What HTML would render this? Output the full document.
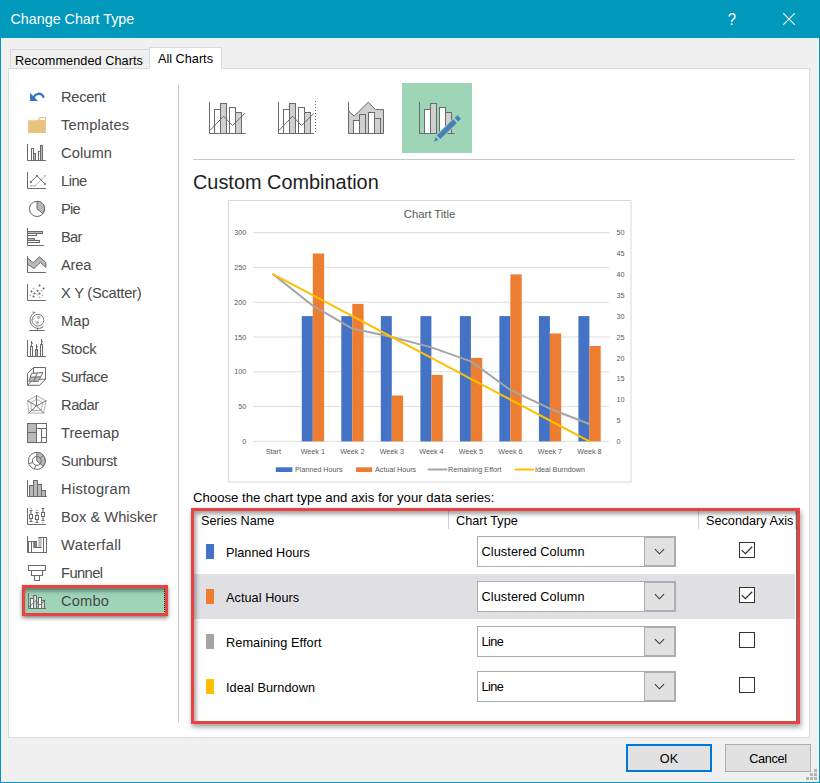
<!DOCTYPE html>
<html>
<head>
<meta charset="utf-8">
<title>Change Chart Type</title>
<style>
html,body{margin:0;padding:0;}
body{width:820px;height:783px;overflow:hidden;background:#f0f0f0;font-family:"Liberation Sans",sans-serif;position:relative;}
.abs{position:absolute;}
#win{position:absolute;left:0;top:0;width:818px;height:782px;border-left:1px solid #0099bc;border-right:1px solid #0099bc;border-bottom:1px solid #0099bc;box-sizing:content-box;background:#f0f0f0;}
#titlebar{position:absolute;left:0;top:0;width:820px;height:38px;background:#0099bc;}
#title{position:absolute;left:10.5px;top:9px;color:#fff;font-size:14.3px;line-height:20px;white-space:nowrap;}
#help{position:absolute;left:725px;top:9px;width:14px;text-align:center;color:#fff;font-size:16.5px;line-height:20px;transform:scaleX(0.9);}
#panel{position:absolute;left:8px;top:68px;width:800px;height:668px;border:1px solid #dadada;background:#fff;}
.tab{position:absolute;box-sizing:border-box;border:1px solid #d9d9d9;border-bottom:none;font-size:12.7px;color:#000;white-space:nowrap;}
#tab1{left:10px;top:49px;width:140px;height:19px;background:#f0f0f0;}
#tab1 span{position:absolute;left:4px;top:4px;letter-spacing:0.06px;line-height:15px;}
#tab2{left:149px;top:47px;width:73px;height:22px;background:#fff;}
#tab2 span{position:absolute;left:8px;top:4px;line-height:15px;}
#vsep{position:absolute;left:178px;top:85px;width:1px;height:637px;background:#c8c8c8;}
.nav{position:absolute;left:61px;font-size:14.7px;color:#494949;line-height:20px;white-space:nowrap;}
.ico{position:absolute;left:24px;width:26px;height:26px;}
#combo{position:absolute;left:22px;top:585px;width:140px;height:25px;border:3px solid #e84340;background:#9fd5b7;box-shadow:0 2px 4px rgba(0,0,0,.5), inset 1px 5px 4px -2px rgba(0,0,0,.42);}
#combo i{position:absolute;right:0;top:1px;width:0;height:23px;border-left:1px dotted #222;}
#hsep{position:absolute;left:193px;top:159px;width:602px;height:1px;background:#c8c8c8;}
#sel{position:absolute;left:402px;top:83px;width:70px;height:70px;background:#9fd5b7;}
#heading{position:absolute;left:193px;top:170px;font-size:19.9px;line-height:24px;color:#1e1e1e;white-space:nowrap;}

#choose{position:absolute;left:193px;top:490px;font-size:13.17px;line-height:16px;color:#000;white-space:nowrap;}
#redbox{position:absolute;left:191px;top:508px;width:603px;height:210px;border:3px solid #e84340;background:transparent;box-shadow:1px 3px 5px rgba(0,0,0,.38), inset -1px 0 0 rgba(70,80,95,.85), inset 3px 4px 4px -1px rgba(0,0,0,.38);z-index:5;pointer-events:none;}
.t13{position:absolute;font-size:12.7px;line-height:16px;color:#000;white-space:nowrap;}
.row2{position:absolute;left:194px;top:574px;width:601px;height:45px;background:#e0dfe4;}
.sw{position:absolute;left:206px;width:8px;height:15px;}
.dd{position:absolute;left:477px;width:197px;height:29px;border:1px solid #abadb3;background:#fff;box-sizing:content-box;}
.dd .btn{position:absolute;right:0;top:0;width:31px;height:29px;box-sizing:border-box;background:#e1e1e1;border:1px solid #adadad;}
.dd .btn svg{position:absolute;left:-1px;top:-1px;}
.dd span{position:absolute;left:3.5px;top:7px;letter-spacing:0.1px;font-size:12.7px;line-height:16px;color:#000;white-space:nowrap;}
.cb{position:absolute;left:739px;width:14px;height:14px;border:1px solid #333;background:#fff;}
.button{position:absolute;top:744px;height:28px;box-sizing:border-box;background:#e1e1e1;font-size:12.7px;color:#000;text-align:center;line-height:16px;}
#ok{left:626px;width:86px;border:2px solid #0078d7;}
#cancel{left:725px;width:86px;border:1px solid #adadad;}
</style>
</head>
<body>
<div id="win"></div>
<div id="titlebar">
  <div id="title">Change Chart Type</div>
  <div id="help">?</div>
  <svg class="abs" style="left:783px;top:13px" width="12" height="12" viewBox="0 0 12 12"><path d="M0.3 0.3 L11.7 11.7 M11.7 0.3 L0.3 11.7" stroke="#fff" stroke-width="1.1" fill="none"/></svg>
</div>

<div id="panel"></div>
<div class="tab" id="tab1"><span>Recommended Charts</span></div>
<div class="tab" id="tab2"><span>All Charts</span></div>

<div id="vsep"></div>

<!-- NAV -->
<div id="combo"><i></i></div>
<div id="navlist">
<div class="nav" style="top:87px;letter-spacing:-0.32px">Recent</div>
<div class="nav" style="top:115px;letter-spacing:0.14px">Templates</div>
<div class="nav" style="top:143px;letter-spacing:0.06px">Column</div>
<div class="nav" style="top:171px;letter-spacing:-0.5px">Line</div>
<div class="nav" style="top:199px;letter-spacing:-0.8px">Pie</div>
<div class="nav" style="top:227px;letter-spacing:-0.75px">Bar</div>
<div class="nav" style="top:255px;letter-spacing:-0.2px">Area</div>
<div class="nav" style="top:283px;letter-spacing:-0.24px">X Y (Scatter)</div>
<div class="nav" style="top:311px;letter-spacing:0.1px">Map</div>
<div class="nav" style="top:339px;letter-spacing:-0.3px">Stock</div>
<div class="nav" style="top:367px;letter-spacing:-0.52px">Surface</div>
<div class="nav" style="top:395px;letter-spacing:-0.48px">Radar</div>
<div class="nav" style="top:423px;letter-spacing:-0.03px">Treemap</div>
<div class="nav" style="top:451px;letter-spacing:-0.39px">Sunburst</div>
<div class="nav" style="top:479px;letter-spacing:0.29px">Histogram</div>
<div class="nav" style="top:507px;letter-spacing:0px">Box &amp; Whisker</div>
<div class="nav" style="top:535px;letter-spacing:0.33px">Waterfall</div>
<div class="nav" style="top:563px;letter-spacing:-0.58px">Funnel</div>
<div class="nav" style="top:591px;letter-spacing:0.15px">Combo</div>
</div>
<!-- NAVICONS_START -->
<svg class="abs" style="left:20px;top:84px" width="36" height="536" viewBox="20 84 36 536" fill="none" stroke-width="1">
<path d="M33.8 99 A5 5 0 0 1 43.7 97.8" stroke="#3573bb" stroke-width="2.3" fill="none"/>
<path d="M30 92.8 L30 101 L38 101 Z" fill="#3573bb"/>
<path d="M28.1 120.2 L37.4 120.2 L39.7 117.1 L45.9 117.1 L45.9 132.9 L28.1 132.9 Z" fill="#e9c27f"/>
<path d="M40.4 118.1 L45 118.1 L45 119.9 L39.1 119.9 Z" fill="#fdf6ea"/>
<path d="M27.5 144 V160.5 H45.9" stroke="#6a6a6a"/>
<rect x="31.5" y="148.5" width="2.00" height="12.00" fill="#fff" stroke="#6a6a6a"/>
<rect x="33.5" y="153.5" width="2.00" height="7.00" fill="#b9b9b9" stroke="#6a6a6a"/>
<rect x="38.5" y="151.5" width="2.00" height="9.00" fill="#fff" stroke="#6a6a6a"/>
<rect x="40.5" y="145.5" width="2.00" height="15.00" fill="#b9b9b9" stroke="#6a6a6a"/>
<path d="M27.5 172 V188.5 H45.9" stroke="#6a6a6a"/>
<polyline points="30.9,185.8 35,185.8 45,175.8" stroke="#b4b4b4"/>
<rect x="30.099999999999998" y="185.0" width="1.6" height="1.6" fill="#b4b4b4"/>
<rect x="34.2" y="185.0" width="1.6" height="1.6" fill="#b4b4b4"/>
<rect x="44.2" y="175.0" width="1.6" height="1.6" fill="#b4b4b4"/>
<polyline points="30.9,182 37,175.8 45,184" stroke="#6a6a6a"/>
<rect x="30.0" y="181.1" width="1.8" height="1.8" fill="#6a6a6a"/>
<rect x="36.1" y="174.9" width="1.8" height="1.8" fill="#6a6a6a"/>
<rect x="44.1" y="183.1" width="1.8" height="1.8" fill="#6a6a6a"/>
<circle cx="37" cy="208.9" r="7.6" fill="#fff" stroke="#6a6a6a"/>
<path d="M37 208.9 L37 201.3 A7.6 7.6 0 0 1 42.99 213.58 Z" fill="#b9b9b9" stroke="#6a6a6a" stroke-linejoin="round"/>
<path d="M27.5 228 V245.5 H43.8" stroke="#6a6a6a"/>
<rect x="27.5" y="231.5" width="15.00" height="2.00" fill="#b9b9b9" stroke="#6a6a6a"/>
<rect x="27.5" y="233.5" width="9.00" height="2.00" fill="#fff" stroke="#6a6a6a"/>
<rect x="27.5" y="238.5" width="7.00" height="2.00" fill="#b9b9b9" stroke="#6a6a6a"/>
<rect x="27.5" y="240.5" width="12.00" height="2.00" fill="#fff" stroke="#6a6a6a"/>
<path d="M27.5 258.1 L33.2 262.7 L39.3 256.7 L45.9 262.7 L45.9 267.4 L40.4 262.4 L34 268.5 L27.5 264.2 Z" fill="#b9b9b9" stroke="#6a6a6a" stroke-linejoin="round"/>
<path d="M27.5 256 V272.5 H45.9" stroke="#6a6a6a"/>
<path d="M27.5 284 V300.5 H45.9" stroke="#6a6a6a"/>
<path d="M39.5 284.15 L40.75 285.4 L39.5 286.65 L38.25 285.4 Z" fill="#6a6a6a"/>
<path d="M43.6 287.25 L44.85 288.5 L43.6 289.75 L42.35 288.5 Z" fill="#6a6a6a"/>
<path d="M31.5 290.15 L32.75 291.4 L31.5 292.65 L30.25 291.4 Z" fill="#6a6a6a"/>
<path d="M37.5 289.45 L38.75 290.7 L37.5 291.95 L36.25 290.7 Z" fill="#6a6a6a"/>
<path d="M34.5 292.15 L35.75 293.4 L34.5 294.65 L33.25 293.4 Z" fill="#6a6a6a"/>
<path d="M39.5 292.15 L40.75 293.4 L39.5 294.65 L38.25 293.4 Z" fill="#6a6a6a"/>
<path d="M33.5 295.35 L34.75 296.6 L33.5 297.85 L32.25 296.6 Z" fill="#6a6a6a"/>
<path d="M33.5 287.25 L34.75 288.5 L33.5 289.75 L32.25 288.5 Z" fill="#c4c4c4"/>
<path d="M41.5 289.45 L42.75 290.7 L41.5 291.95 L40.25 290.7 Z" fill="#c4c4c4"/>
<path d="M30.4 294.05 L31.65 295.3 L30.4 296.55 L29.15 295.3 Z" fill="#c4c4c4"/>
<path d="M37.4 293.35 L38.65 294.6 L37.4 295.85 L36.15 294.6 Z" fill="#c4c4c4"/>
<path d="M42.5 294.05 L43.75 295.3 L42.5 296.55 L41.25 295.3 Z" fill="#c4c4c4"/>
<path d="M39.5 296.05 L40.75 297.3 L39.5 298.55 L38.25 297.3 Z" fill="#c4c4c4"/>
<circle cx="37.9" cy="320.2" r="5.9" fill="#fff" stroke="#7c7c7c"/>
<path d="M36.5 316.5 q2 -1.6 4 0 q0.6 1.8 -1.4 2.6 q-2.2 0.2 -2.6 -2.6z M35.2 321.5 q2.4 -1.2 4.2 0.4 q-0.2 2.2 -2.2 2.6 q-2 -0.6 -2 -3z M33.2 318.4 q0.8 -0.8 1 0.6 q-0.2 1 -0.8 1z" fill="#bdbdbd"/>
<path d="M34.4 312.6 A8.3 8.3 0 0 0 42.6 327.4" stroke="#6a6a6a" stroke-width="0.9"/>
<path d="M32.6 312.1 L35.4 312.5 M41.6 327.9 L43.4 326.2" stroke="#6a6a6a" stroke-width="0.9"/>
<path d="M37.4 328 V330.4 M29.3 330.5 H44.7" stroke="#6a6a6a"/>
<path d="M27.5 340 V356.5 H45.9" stroke="#6a6a6a"/>
<rect x="30.5" y="346.5" width="2.00" height="10.00" fill="#fff" stroke="#6a6a6a"/>
<path d="M31.5 341 V346.5 M31.5 343.3 H33" stroke="#6a6a6a"/>
<rect x="35.5" y="349.5" width="2.00" height="7.00" fill="#b9b9b9" stroke="#6a6a6a"/>
<path d="M36.5 344.1 V349.5 M36.5 346.8 H38" stroke="#6a6a6a"/>
<rect x="40.5" y="344.5" width="2.00" height="12.00" fill="#fff" stroke="#6a6a6a"/>
<path d="M41.5 338.9 V344.5 M41.5 341.4 H43" stroke="#6a6a6a"/>
<path d="M33.5 367.5 H45.5 V379.2 L39.5 385.3 H27.5 V373.4 Z M33.5 367.5 V379.2 H45.5 M27.5 385.3 L33.5 379.2" stroke="#6a6a6a" fill="#fff" stroke-linejoin="round"/>
<path d="M31.6 373.4 L42.9 372.5 L38.3 381.3 L28.9 381.3 Z" fill="#fff"/>
<path d="M30.2 377.2 L40.6 376.8 L38.3 381.3 L28.9 381.3 Z" fill="#b9b9b9"/>
<path d="M31.6 373.4 L42.9 372.5 L38.3 381.3 L28.9 381.3 Z M30.2 377.2 L40.6 376.8 M37.3 372.9 L33.7 381.3" stroke="#6a6a6a" stroke-linejoin="round"/>
<polygon points="36.5,395.6 46.1,400.8 43.6,413.0 28.8,413.0 27.7,400.8" stroke="#a8a8a8" stroke-width="0.9"/>
<polygon points="36.5,399.2 42.8,402.6 41.1,410.5 31.5,410.5 30.7,402.6" stroke="#a8a8a8" stroke-width="0.9"/>
<path d="M36.5 405.9 L36.5 395.1" stroke="#737373" stroke-width="1"/>
<path d="M36.5 405.9 L46.6 400.5" stroke="#737373" stroke-width="1"/>
<path d="M36.5 405.9 L44 413.4" stroke="#737373" stroke-width="1"/>
<path d="M36.5 405.9 L28.4 413.4" stroke="#737373" stroke-width="1"/>
<path d="M36.5 405.9 L27.2 400.5" stroke="#737373" stroke-width="1"/>
<rect x="27.5" y="423.5" width="9.00" height="9.00" fill="#b9b9b9" stroke="#6a6a6a"/>
<rect x="27.5" y="432.5" width="9.00" height="10.00" fill="#b9b9b9" stroke="#6a6a6a"/>
<rect x="36.5" y="423.5" width="10.00" height="5.00" fill="#fff" stroke="#6a6a6a"/>
<rect x="36.5" y="428.5" width="5.00" height="14.00" fill="#fff" stroke="#6a6a6a"/>
<rect x="41.5" y="428.5" width="5.00" height="9.00" fill="#fff" stroke="#6a6a6a"/>
<rect x="41.5" y="437.5" width="5.00" height="5.00" fill="#fff" stroke="#6a6a6a"/>
<circle cx="36.8" cy="460.9" r="8.5" fill="#fff" stroke="#6a6a6a"/>
<path d="M36.8 460.9 L36.8 452.4 A8.5 8.5 0 0 1 43.31 466.36 Z" fill="#b9b9b9" stroke="#6a6a6a" stroke-linejoin="round"/>
<circle cx="36.8" cy="460.9" r="4.4" stroke="#6a6a6a"/>
<path d="M40.17 458.07 L43.31 455.44" stroke="#6a6a6a"/>
<path d="M35.66 465.15 L34.60 469.11" stroke="#6a6a6a"/>
<path d="M32.67 462.40 L28.81 463.81" stroke="#6a6a6a"/>
<path d="M27.5 480.2 V496.5 H46.8" stroke="#6a6a6a"/>
<rect x="29.5" y="485.5" width="4.00" height="11.00" fill="#b9b9b9" stroke="#6a6a6a"/>
<rect x="33.5" y="480.5" width="4.00" height="16.00" fill="#b9b9b9" stroke="#6a6a6a"/>
<rect x="37.5" y="484.5" width="4.00" height="12.00" fill="#b9b9b9" stroke="#6a6a6a"/>
<rect x="41.5" y="490.5" width="4.00" height="6.00" fill="#b9b9b9" stroke="#6a6a6a"/>
<path d="M27.5 508 V524.5 H45.9" stroke="#6a6a6a"/>
<path d="M31 510.5 V521.5 M29.5 510.5 H32.5 M29.5 521.5 H32.5" stroke="#6a6a6a" stroke-width="1.1"/>
<rect x="29.5" y="514.5" width="3.00" height="4.00" fill="#fff" stroke="#6a6a6a"/>
<circle cx="31" cy="508.4" r="0.6" fill="#6a6a6a"/>
<path d="M37 512.5 V522.5 M35.5 512.5 H38.5 M35.5 522.5 H38.5" stroke="#6a6a6a" stroke-width="1.1"/>
<rect x="35.5" y="515.5" width="3.00" height="4.00" fill="#fff" stroke="#6a6a6a"/>
<circle cx="37" cy="510.4" r="0.6" fill="#6a6a6a"/>
<path d="M43 508.5 V520.5 M41.5 508.5 H44.5 M41.5 520.5 H44.5" stroke="#6a6a6a" stroke-width="1.1"/>
<rect x="41.5" y="512.5" width="3.00" height="4.00" fill="#fff" stroke="#6a6a6a"/>
<circle cx="43" cy="522.6" r="0.6" fill="#6a6a6a"/>
<path d="M27.5 536.2 V552.5 H46.8" stroke="#6a6a6a"/>
<rect x="33.2" y="541.5" width="3.8" height="5.9" fill="#7a7a7a"/>
<rect x="38.3" y="537.2" width="3.3" height="10.2" fill="#bcbcbc"/>
<rect x="28.5" y="541.5" width="3.00" height="11.00" fill="#fff" stroke="#6a6a6a"/>
<rect x="43.5" y="537.5" width="3.00" height="15.00" fill="#fff" stroke="#6a6a6a"/>
<path d="M28.5 541.5 H37 M33.2 547.5 H41.6 M38.3 537.5 H46.5" stroke="#6a6a6a"/>
<rect x="28.5" y="565.5" width="17.00" height="5.00" fill="#fff" stroke="#6a6a6a"/>
<rect x="31.5" y="570.5" width="11.00" height="5.00" fill="#fff" stroke="#6a6a6a"/>
<rect x="34.5" y="575.5" width="5.00" height="5.00" fill="#fff" stroke="#6a6a6a"/>
<path d="M28.5 593.1 V608.5 H45.9" stroke="#6a6a6a"/>
<rect x="30.5" y="598.5" width="3.00" height="10.00" fill="#fff" stroke="#6a6a6a"/>
<rect x="33.5" y="595.5" width="3.00" height="13.00" fill="#d9d9d9" stroke="#6a6a6a"/>
<rect x="38.5" y="597.5" width="3.00" height="11.00" fill="#fff" stroke="#6a6a6a"/>
<rect x="41.5" y="600.5" width="3.00" height="8.00" fill="#d9d9d9" stroke="#6a6a6a"/>
<polyline points="29,607 35.5,601 40.1,605 45.6,599.5" stroke="#6a6a6a" stroke-width="0.9"/>
</svg>
<!-- NAVICONS_END -->

<!-- TOP ICONS -->
<div id="sel"></div>
<!-- TOPICONS_START -->
<svg class="abs" style="left:192px;top:83px" width="290" height="72" viewBox="192 83 290 72" fill="none" stroke-width="1">
<rect x="214.5" y="109.5" width="6.00" height="24.00" fill="#fff" stroke="#6a6a6a"/>
<rect x="220.5" y="103.5" width="6.00" height="30.00" fill="#d0d0d0" stroke="#6a6a6a"/>
<rect x="229.5" y="107.5" width="6.00" height="26.00" fill="#fff" stroke="#6a6a6a"/>
<rect x="235.5" y="112.5" width="6.00" height="21.00" fill="#d0d0d0" stroke="#6a6a6a"/>
<path d="M209.5 101.9 V133.5 H245.7" stroke="#6a6a6a"/>
<polyline points="210.0,130.4 223.7,116.2 232.6,125.6 244.9,113.3" stroke="#6a6a6a"/>
<rect x="283.5" y="109.5" width="6.00" height="24.00" fill="#fff" stroke="#6a6a6a"/>
<rect x="289.5" y="103.5" width="6.00" height="30.00" fill="#d0d0d0" stroke="#6a6a6a"/>
<rect x="298.5" y="107.5" width="6.00" height="26.00" fill="#fff" stroke="#6a6a6a"/>
<rect x="304.5" y="112.5" width="6.00" height="21.00" fill="#d0d0d0" stroke="#6a6a6a"/>
<path d="M278.5 101.9 V133.5 H314" stroke="#6a6a6a"/>
<polyline points="279.0,130.4 292.7,116.2 301.6,125.6 313.9,113.3" stroke="#6a6a6a"/>
<path d="M315.5 101 V134" stroke="#6a6a6a" stroke-dasharray="1 2"/>
<path d="M348.5 110.7 L354.1 116.2 L368.3 102.2 L375.5 109.5 L383.5 109.5 L383.5 133.5 L348.5 133.5 Z" fill="#d0d0d0" stroke="#6a6a6a" stroke-linejoin="miter"/>
<path d="M348.5 101.9 V133.5" stroke="#6a6a6a"/>
<rect x="353.5" y="120.5" width="6.00" height="13.00" fill="#fff" stroke="#6a6a6a"/>
<rect x="359.5" y="114.5" width="6.00" height="19.00" fill="#d0d0d0" stroke="#6a6a6a"/>
<rect x="368.5" y="112.5" width="6.00" height="21.00" fill="#fff" stroke="#6a6a6a"/>
<rect x="374.5" y="118.5" width="6.00" height="15.00" fill="#d0d0d0" stroke="#6a6a6a"/>
<rect x="424.5" y="109.5" width="6.00" height="24.00" fill="#fff" stroke="#6a6a6a"/>
<rect x="430.5" y="103.5" width="6.00" height="30.00" fill="#d0d0d0" stroke="#6a6a6a"/>
<rect x="439.5" y="107.5" width="6.00" height="26.00" fill="#fff" stroke="#6a6a6a"/>
<rect x="445.5" y="112.5" width="6.00" height="21.00" fill="#d0d0d0" stroke="#6a6a6a"/>
<path d="M419.5 101.9 V133.5 H454.5" stroke="#6a6a6a"/>
<g transform="translate(433.9 141.8) rotate(-44.4)" stroke="#9fd5b7" stroke-width="2" paint-order="stroke">
<path d="M0 0 L4.5 -2 L4.5 2 Z" fill="#4a7ebb"/>
<rect x="6.6" y="-2.5" width="23" height="5" fill="#4a7ebb"/>
<rect x="31.6" y="-2.5" width="3.9" height="5" fill="#4a7ebb"/>
</g>
</svg>
<!-- TOPICONS_END -->
<div id="hsep"></div>
<div id="heading">Custom Combination</div>

<!-- CHART_START -->
<svg id="chart" class="abs" style="left:228px;top:200px" width="404" height="283" viewBox="228 200 404 283" font-family="Liberation Sans, sans-serif">
<rect x="228.5" y="200.5" width="402.5" height="281.5" fill="#fff" stroke="#d9d9d9" stroke-width="1"/>
<line x1="253.5" x2="609.2" y1="441.4" y2="441.4" stroke="#d9d9d9" stroke-width="0.9"/>
<line x1="253.5" x2="609.2" y1="406.6" y2="406.6" stroke="#d9d9d9" stroke-width="0.9"/>
<line x1="253.5" x2="609.2" y1="371.8" y2="371.8" stroke="#d9d9d9" stroke-width="0.9"/>
<line x1="253.5" x2="609.2" y1="337.0" y2="337.0" stroke="#d9d9d9" stroke-width="0.9"/>
<line x1="253.5" x2="609.2" y1="302.2" y2="302.2" stroke="#d9d9d9" stroke-width="0.9"/>
<line x1="253.5" x2="609.2" y1="267.4" y2="267.4" stroke="#d9d9d9" stroke-width="0.9"/>
<line x1="253.5" x2="609.2" y1="232.6" y2="232.6" stroke="#d9d9d9" stroke-width="0.9"/>
<rect x="301.8" y="316.1" width="11.0" height="125.3" fill="#4472c4"/>
<rect x="312.8" y="253.5" width="11.3" height="187.9" fill="#ed7d31"/>
<rect x="341.3" y="316.1" width="11.0" height="125.3" fill="#4472c4"/>
<rect x="352.3" y="303.9" width="11.3" height="137.5" fill="#ed7d31"/>
<rect x="380.8" y="316.1" width="11.0" height="125.3" fill="#4472c4"/>
<rect x="391.8" y="395.5" width="11.3" height="45.9" fill="#ed7d31"/>
<rect x="420.4" y="316.1" width="11.0" height="125.3" fill="#4472c4"/>
<rect x="431.4" y="374.9" width="11.3" height="66.5" fill="#ed7d31"/>
<rect x="459.9" y="316.1" width="11.0" height="125.3" fill="#4472c4"/>
<rect x="470.9" y="357.9" width="11.3" height="83.5" fill="#ed7d31"/>
<rect x="499.4" y="316.1" width="11.0" height="125.3" fill="#4472c4"/>
<rect x="510.4" y="274.4" width="11.3" height="167.0" fill="#ed7d31"/>
<rect x="538.9" y="316.1" width="11.0" height="125.3" fill="#4472c4"/>
<rect x="549.9" y="333.5" width="11.3" height="107.9" fill="#ed7d31"/>
<rect x="578.4" y="316.1" width="11.0" height="125.3" fill="#4472c4"/>
<rect x="589.4" y="346.0" width="11.3" height="95.4" fill="#ed7d31"/>
<polyline points="273.3,274.4 312.8,305.7 352.3,328.6 391.8,337.0 431.4,347.4 470.9,361.4 510.4,389.9 549.9,408.7 589.4,424.0" fill="none" stroke="#a5a5a5" stroke-width="2" stroke-linejoin="round" stroke-linecap="round"/>
<polyline points="273.3,274.4 312.8,295.2 352.3,316.1 391.8,337.0 431.4,357.9 470.9,378.8 510.4,399.6 549.9,420.5 589.4,441.4" fill="none" stroke="#ffc000" stroke-width="2" stroke-linejoin="round" stroke-linecap="round"/>
<g fill="#595959" font-size="7.2">
<text x="246.3" y="444.0" text-anchor="end">0</text>
<text x="246.3" y="409.2" text-anchor="end">50</text>
<text x="246.3" y="374.4" text-anchor="end">100</text>
<text x="246.3" y="339.6" text-anchor="end">150</text>
<text x="246.3" y="304.8" text-anchor="end">200</text>
<text x="246.3" y="270.0" text-anchor="end">250</text>
<text x="246.3" y="235.2" text-anchor="end">300</text>
<text x="616.6" y="444.0">0</text>
<text x="616.6" y="423.1">5</text>
<text x="616.6" y="402.2">10</text>
<text x="616.6" y="381.4">15</text>
<text x="616.6" y="360.5">20</text>
<text x="616.6" y="339.6">25</text>
<text x="616.6" y="318.7">30</text>
<text x="616.6" y="297.8">35</text>
<text x="616.6" y="277.0">40</text>
<text x="616.6" y="256.1">45</text>
<text x="616.6" y="235.2">50</text>
<text x="273.3" y="453.9" text-anchor="middle">Start</text>
<text x="312.8" y="453.9" text-anchor="middle">Week 1</text>
<text x="352.3" y="453.9" text-anchor="middle">Week 2</text>
<text x="391.8" y="453.9" text-anchor="middle">Week 3</text>
<text x="431.4" y="453.9" text-anchor="middle">Week 4</text>
<text x="470.9" y="453.9" text-anchor="middle">Week 5</text>
<text x="510.4" y="453.9" text-anchor="middle">Week 6</text>
<text x="549.9" y="453.9" text-anchor="middle">Week 7</text>
<text x="589.4" y="453.9" text-anchor="middle">Week 8</text>
<text x="295" y="472.2">Planned Hours</text>
<text x="375" y="472.2">Actual Hours</text>
<text x="448" y="472.2">Remaining Effort</text>
<text x="535" y="472.2">Ideal Burndown</text>
</g>
<rect x="275.8" y="467.3" width="16.6" height="4.7" fill="#4472c4"/>
<rect x="356" y="467.3" width="16.2" height="4.7" fill="#ed7d31"/>
<line x1="428.5" x2="446.5" y1="469.6" y2="469.6" stroke="#a5a5a5" stroke-width="2" stroke-linecap="round"/>
<line x1="515.5" x2="533.5" y1="469.6" y2="469.6" stroke="#ffc000" stroke-width="2" stroke-linecap="round"/>
<text x="429.5" y="218" text-anchor="middle" font-size="11.3" fill="#595959">Chart Title</text>
</svg>
<!-- CHART_END -->

<div id="choose">Choose the chart type and axis for your data series:</div>
<div class="row2"></div>
<!-- TABLE_START -->
<div class="t13" style="left:201px;top:513px">Series Name</div>
<div class="t13" style="left:456px;top:513px">Chart Type</div>
<div class="t13" style="left:706px;top:513px">Secondary Axis</div>
<div class="abs" style="left:448px;top:511px;width:1px;height:18px;background:#d0d0d0"></div>
<div class="abs" style="left:698px;top:511px;width:1px;height:18px;background:#d0d0d0"></div>
<div class="abs" style="left:795px;top:511px;width:1px;height:18px;background:#d0d0d0"></div>
<div class="sw" style="top:544px;background:#4472c4"></div>
<div class="t13" style="left:226px;top:545px;letter-spacing:0px">Planned Hours</div>
<div class="dd" style="top:536px"><span>Clustered Column</span><div class="btn"><svg width="31" height="29" viewBox="0 0 31 29"><path d="M10.9 12.2 L15.5 16.8 L20.1 12.2" fill="none" stroke="#3a3a3a" stroke-width="1.1"/></svg></div></div>
<div class="cb" style="top:542px"><svg width="14" height="14" viewBox="0 0 14 14" style="position:absolute;left:0;top:0"><path d="M1.7 7.1 L5.4 10.7 L12.2 3.7" fill="none" stroke="#333" stroke-width="1.3"/></svg></div>
<div class="sw" style="top:589px;background:#ed7d31"></div>
<div class="t13" style="left:226px;top:590px;letter-spacing:0.05px">Actual Hours</div>
<div class="dd" style="top:581px"><span>Clustered Column</span><div class="btn"><svg width="31" height="29" viewBox="0 0 31 29"><path d="M10.9 12.2 L15.5 16.8 L20.1 12.2" fill="none" stroke="#3a3a3a" stroke-width="1.1"/></svg></div></div>
<div class="cb" style="top:587px"><svg width="14" height="14" viewBox="0 0 14 14" style="position:absolute;left:0;top:0"><path d="M1.7 7.1 L5.4 10.7 L12.2 3.7" fill="none" stroke="#333" stroke-width="1.3"/></svg></div>
<div class="sw" style="top:634px;background:#a5a5a5"></div>
<div class="t13" style="left:226px;top:635px;letter-spacing:0.08px">Remaining Effort</div>
<div class="dd" style="top:626px"><span style="letter-spacing:-0.6px">Line</span><div class="btn"><svg width="31" height="29" viewBox="0 0 31 29"><path d="M10.9 12.2 L15.5 16.8 L20.1 12.2" fill="none" stroke="#3a3a3a" stroke-width="1.1"/></svg></div></div>
<div class="cb" style="top:632px"></div>
<div class="sw" style="top:679px;background:#ffc000"></div>
<div class="t13" style="left:226px;top:680px;letter-spacing:0.06px">Ideal Burndown</div>
<div class="dd" style="top:671px"><span style="letter-spacing:-0.6px">Line</span><div class="btn"><svg width="31" height="29" viewBox="0 0 31 29"><path d="M10.9 12.2 L15.5 16.8 L20.1 12.2" fill="none" stroke="#3a3a3a" stroke-width="1.1"/></svg></div></div>
<div class="cb" style="top:677px"></div>
<!-- TABLE_END -->
<div id="redbox"></div>

<div class="button" id="ok"><span style="position:relative;top:5px">OK</span></div>
<div class="button" id="cancel"><span style="position:relative;top:6px;letter-spacing:-0.35px">Cancel</span></div>
<svg class="abs" style="left:806px;top:769px" width="12" height="12" viewBox="0 0 12 12" fill="#b4b4b4"><rect x="8" y="0" width="3" height="3"/><rect x="4" y="4" width="3" height="3"/><rect x="8" y="4" width="3" height="3"/><rect x="0" y="8" width="3" height="3"/><rect x="4" y="8" width="3" height="3"/><rect x="8" y="8" width="3" height="3"/></svg>
</body>
</html>
